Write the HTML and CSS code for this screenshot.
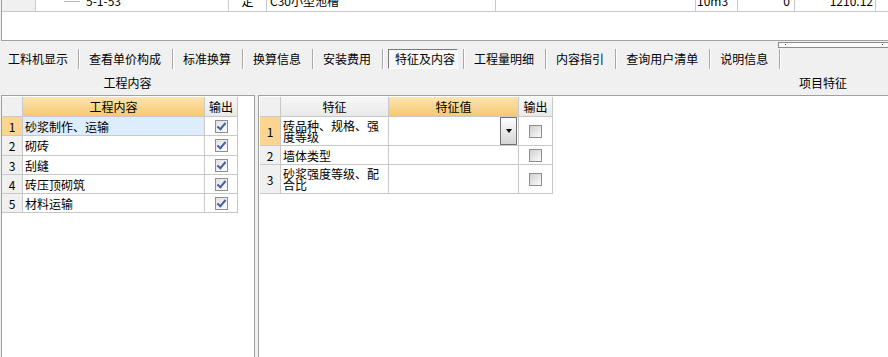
FILE: index.html
```html
<!DOCTYPE html>
<html lang="zh-CN">
<head>
    <meta charset="UTF-8">
    <title>特征及内容</title>
    <link rel="stylesheet" href="styles.css">
</head>
<body>
    <div class="top">
        <div class="top-row">
            <div class="tc tc-head"></div>
            <div class="tc tc-code"><span class="tree-line"></span>5-1-53</div>
            <div class="tc tc-type">定</div>
            <div class="tc tc-name">C30小型池槽</div>
            <div class="tc tc-spec"></div>
            <div class="tc tc-unit">10m3</div>
            <div class="tc tc-qty">0</div>
            <div class="tc tc-price">1210.12</div>
            <div class="tc tc-rest"></div>
        </div>
    </div>

    <div class="strip">
        <div class="grip"><span class="dot"></span><span class="dot"></span></div>
    </div>

    <div class="tabs">
        <span class="tab first">工料机显示</span><span class="sep"></span>
        <span class="tab">查看单价构成</span><span class="sep"></span>
        <span class="tab">标准换算</span><span class="sep"></span>
        <span class="tab">换算信息</span><span class="sep"></span>
        <span class="tab">安装费用</span><span class="sep"></span>
        <span class="tab active">特征及内容</span><span class="sep"></span>
        <span class="tab">工程量明细</span><span class="sep"></span>
        <span class="tab">内容指引</span><span class="sep"></span>
        <span class="tab">查询用户清单</span><span class="sep"></span>
        <span class="tab">说明信息</span><span class="sep"></span>
    </div>

    <div class="labels">
        <div class="lbl-left">工程内容</div>
        <div class="lbl-right">项目特征</div>
    </div>

    <div class="panels">
        <div class="panel panel-left">
            <div class="grid grid-work">
                <div class="cell hd num"></div>
                <div class="cell hd orange">工程内容</div>
                <div class="cell hd">输出</div>

                <div class="cell num sel">1</div>
                <div class="cell txt cur">砂浆制作、运输</div>
                <div class="cell mid"><span class="cb on"></span></div>

                <div class="cell num">2</div>
                <div class="cell txt">砌砖</div>
                <div class="cell mid"><span class="cb on"></span></div>

                <div class="cell num">3</div>
                <div class="cell txt">刮缝</div>
                <div class="cell mid"><span class="cb on"></span></div>

                <div class="cell num">4</div>
                <div class="cell txt">砖压顶砌筑</div>
                <div class="cell mid"><span class="cb on"></span></div>

                <div class="cell num">5</div>
                <div class="cell txt">材料运输</div>
                <div class="cell mid"><span class="cb on"></span></div>
            </div>
        </div>

        <div class="panel panel-right">
            <div class="grid grid-feat">
                <div class="cell hd num"></div>
                <div class="cell hd">特征</div>
                <div class="cell hd orange">特征值</div>
                <div class="cell hd">输出</div>

                <div class="cell num sel tall">1</div>
                <div class="cell txt tall">砖品种、规格、强度等级</div>
                <div class="cell val tall"><span class="dd"><span class="arrow"></span></span></div>
                <div class="cell mid tall"><span class="cb"></span></div>

                <div class="cell num">2</div>
                <div class="cell txt">墙体类型</div>
                <div class="cell val"></div>
                <div class="cell mid"><span class="cb"></span></div>

                <div class="cell num tall">3</div>
                <div class="cell txt tall">砂浆强度等级、配合比</div>
                <div class="cell val tall"></div>
                <div class="cell mid tall"><span class="cb"></span></div>
            </div>
        </div>
    </div>
</body>
</html>
```

FILE: styles.css
```css
:root {
    --bg: #f0f0f0;
    --frame: #a0a0a0;
    --line: #c8c8c8;
    --orange-top: #fde4b2;
    --orange-bottom: #f7c86f;
    --row-sel: #fcd592;
    --row-cur: #deedfb;
}

body {
    margin: 0;
    background-color: var(--bg);
    font-family: "Noto Sans CJK SC", "Liberation Sans", sans-serif;
    font-size: 12px;
    color: #000;
    overflow: hidden;
}

/* upper list */
.top {
    height: 40px;
    margin-left: 1px;
    background: #fff;
    border-left: 1px solid var(--frame);
    border-bottom: 1px solid var(--frame);
    overflow: hidden;
}

.top-row {
    display: flex;
    height: 20px;
    margin-top: -9px;
    border-bottom: 1px solid var(--line);
    line-height: 20px;
}

.tc {
    box-sizing: border-box;
    border-right: 1px solid var(--line);
    white-space: nowrap;
}

.tc-head { width: 34px; background: var(--bg); }
.tc-code { width: 193px; padding-left: 28px; display: flex; align-items: center; }
.tc-type { width: 38px; text-align: center; }
.tc-name { width: 229px; padding-left: 3px; }
.tc-spec { width: 200px; }
.tc-unit { width: 42px; padding-left: 1px; }
.tc-qty { width: 57px; text-align: right; padding-right: 4px; }
.tc-price { width: 81px; text-align: right; padding-right: 2px; }
.tc-rest { flex: 1; border-right: none; }

.tree-line {
    width: 16px;
    height: 1px;
    margin-right: 6px;
    background: #b8b8b8;
}

/* splitter grip */
.strip {
    height: 6px;
    display: flex;
    justify-content: flex-end;
}

.grip {
    width: 98px;
    height: 3px;
    margin-top: 1px;
    border: 1px solid #8a8a8a;
    border-right: none;
    background: #fbfbfb;
    display: flex;
    justify-content: space-between;
    padding: 1px 5px 0 6px;
    box-sizing: content-box;
}

.dot {
    width: 1px;
    height: 1px;
    background: #444;
}

/* tab strip */
.tabs {
    display: flex;
    align-items: center;
    height: 23px;
    padding-left: 8px;
}

.tab {
    padding: 0 11px 0 10px;
    line-height: 20px;
    white-space: nowrap;
}

.tab.first {
    padding-left: 0;
    padding-right: 10px;
}

.tab.active {
    height: 18px;
    line-height: 18px;
    margin: 0 5px;
    padding: 0 2px 0 6px;
    border: 1px solid;
    border-color: #7a7a7a #ffffff #ffffff #7a7a7a;
    background: #f8f8f8;
}

.sep {
    width: 1px;
    height: 20px;
    background: #a8a8a8;
    box-shadow: 1px 0 0 #ffffff;
}

/* captions */
.labels {
    display: flex;
    align-items: center;
    height: 25px;
}

.lbl-left {
    width: 255px;
    text-align: center;
}

.lbl-right {
    flex: 1;
    text-align: right;
    padding-right: 41px;
}

/* panels */
.panels {
    display: flex;
    gap: 3px;
    height: 262px;
    padding-left: 1px;
}

.panel {
    background: #fff;
    border-top: 1px solid var(--frame);
    border-left: 1px solid var(--frame);
    box-sizing: border-box;
}

.panel-left {
    width: 254px;
    border-right: 1px solid var(--frame);
}

.panel-right {
    flex: 1;
    padding-left: 1px;
}

.grid {
    display: grid;
    margin-top: 1px;
    width: max-content;
}

.grid-work {
    grid-template-columns: 21px 182px 33px;
    grid-template-rows: 20px 19px 20px 19px 19px 19px;
}

.grid-feat {
    grid-template-columns: 21px 108px 130px 34px;
    grid-template-rows: 20px 29px 19px 29px;
}

.cell {
    box-sizing: border-box;
    border-right: 1px solid var(--line);
    border-bottom: 1px solid var(--line);
    display: flex;
    align-items: center;
    justify-content: center;
    line-height: 11px;
    overflow: hidden;
}

.cell.hd {
    background: linear-gradient(#f7f7f7, #e9e9e9);
    line-height: 19px;
}

.cell.hd.orange {
    background: linear-gradient(var(--orange-top), var(--orange-bottom));
}

.cell.num {
    background: var(--bg);
}

.cell.num.sel {
    background: var(--row-sel);
}

.cell.txt {
    justify-content: flex-start;
    padding-left: 2px;
}

.cell.cur {
    background: var(--row-cur);
}

.cell.val {
    justify-content: flex-end;
    align-items: stretch;
}

/* dropdown button */
.dd {
    width: 17px;
    margin: 0 1px 0 0;
    box-sizing: border-box;
    border: 1px solid #707070;
    background: linear-gradient(#ffffff, #d4d4d4);
    display: flex;
    align-items: center;
    justify-content: center;
}

.arrow {
    width: 0;
    height: 0;
    border-left: 3.5px solid transparent;
    border-right: 3.5px solid transparent;
    border-top: 4px solid #000;
}

/* check boxes */
.cb {
    width: 13px;
    height: 13px;
    box-sizing: border-box;
    border: 1px solid #8f8f8f;
    background: linear-gradient(135deg, #cfcfcf, #fbfbfb);
    position: relative;
}

.cb.on {
    background: linear-gradient(135deg, #e2e2e2, #fdfdfd);
}

.cb.on::after {
    content: "";
    position: absolute;
    left: 3px;
    top: 0px;
    width: 3px;
    height: 7px;
    border-right: 2px solid #4660a8;
    border-bottom: 2px solid #4660a8;
    transform: rotate(40deg);
}
```
